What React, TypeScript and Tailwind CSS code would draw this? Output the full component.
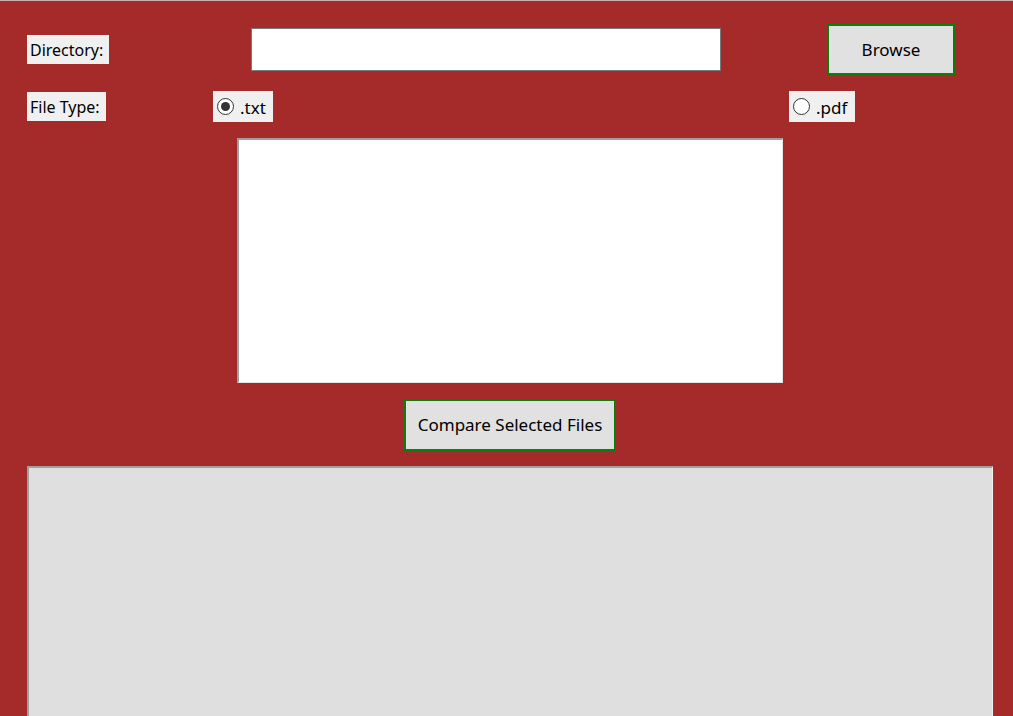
const font = { fontFamily: '"Noto Sans", "Open Sans", sans-serif' };

function Radio({ label, checked, width }: { label: string; checked?: boolean; width: string }) {
  return (
    <div className={`flex items-center h-[31px] bg-[#f0f0f0] pl-[4px] gap-[6px] text-[17px] text-black ${width}`}>
      <span className="w-[17px] h-[17px] shrink-0 rounded-full border border-[#333] bg-white flex items-center justify-center">
        {checked && <span className="w-[9px] h-[9px] rounded-full bg-[#333]" />}
      </span>
      <span className="leading-none pt-[1px]">{label}</span>
    </div>
  );
}

export default function App() {
  return (
    <div
      className="w-[1013px] h-[716px] overflow-hidden bg-[#a52a2a] border-t border-[#c8b0b0] text-black"
      style={font}
    >
      {/* Directory row */}
      <div className="flex items-center pl-[27px] mt-[23px] h-[51px]">
        <div className="w-[82px] h-[29px] bg-[#f0f0f0] flex items-center pl-[3px] text-[16px] whitespace-nowrap">
          Directory:
        </div>
        <div className="ml-[142px] w-[470px] h-[43px] bg-white border border-[#7a7a7a]" />
        <button className="ml-[106px] w-[128px] h-[51px] bg-[#e1e1e1] border-2 border-[#107c10] text-[17px] flex items-center justify-center">
          Browse
        </button>
      </div>

      {/* File type row */}
      <div className="flex items-center pl-[27px] mt-[16px] h-[31px]">
        <div className="w-[79px] h-[29px] bg-[#f0f0f0] flex items-center pl-[3px] text-[16px] whitespace-nowrap">
          File Type:
        </div>
        <div className="ml-[107px]">
          <Radio label=".txt" checked width="w-[60px]" />
        </div>
        <div className="ml-[516px]">
          <Radio label=".pdf" width="w-[66px]" />
        </div>
      </div>

      {/* File list */}
      <div className="ml-[237px] mt-[16px] w-[546px] h-[245px] bg-white border-t-2 border-l-2 border-t-[#a0a0a0] border-l-[#a0a0a0] border-r border-b border-r-[#e3e3e3] border-b-[#e3e3e3]" />

      {/* Compare button */}
      <div className="flex justify-center pl-[7px] mt-[16px]">
        <button className="w-[212px] h-[52px] bg-[#e1e1e1] border-2 border-[#107c10] text-[17px] flex items-center justify-center">
          Compare Selected Files
        </button>
      </div>

      {/* Result area */}
      <div className="ml-[27px] mt-[15px] w-[966px] h-[260px] bg-[#dfdfdf] border-t-2 border-l-2 border-t-[#a0a0a0] border-l-[#a0a0a0] border-r border-r-[#f0f0f0]" />
    </div>
  );
}
